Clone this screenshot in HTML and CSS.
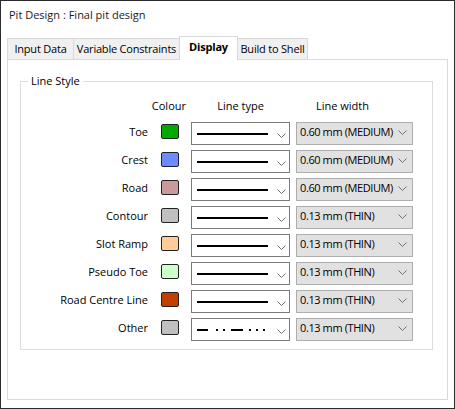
FILE: index.html
```html
<!DOCTYPE html>
<html>
<head>
<meta charset="utf-8">
<link rel="stylesheet" href="styles.css">
</head>
<body>
<div class="window">
  <div class="titlebar">Pit Design : Final pit design</div>
  <div class="tabs">
    <div class="tab t1">Input Data</div>
    <div class="tab t2">Variable Constraints</div>
    <div class="tab t3 active">Display</div>
    <div class="tab t4">Build to Shell</div>
  </div>
  <div class="panel">
    <div class="group">
      <span class="legend">Line Style</span>
      <div class="grid">
        <div></div>
        <div class="hdr hc">Colour</div>
        <div class="hdr hl">Line type</div>
        <div class="hdr hw">Line width</div>

        <div class="label">Toe</div>
        <div class="swatch" style="background:#00aa00"></div>
        <div class="ltype"><svg width="97" height="21"><rect class="solid" x="5" y="10" width="71" height="2"/><polyline class="chev" points="85.5,10.5 89.5,14.5 93.5,10.5"/></svg></div>
        <div class="lwidth"><span>0.60 mm (MEDIUM)</span><svg width="9" height="6"><polyline class="chev" points="0.5,0.5 4.5,4.5 8.5,0.5"/></svg></div>

        <div class="label">Crest</div>
        <div class="swatch" style="background:#6b8cff"></div>
        <div class="ltype"><svg width="97" height="21"><rect class="solid" x="5" y="10" width="71" height="2"/><polyline class="chev" points="85.5,10.5 89.5,14.5 93.5,10.5"/></svg></div>
        <div class="lwidth"><span>0.60 mm (MEDIUM)</span><svg width="9" height="6"><polyline class="chev" points="0.5,0.5 4.5,4.5 8.5,0.5"/></svg></div>

        <div class="label">Road</div>
        <div class="swatch" style="background:#cc9999"></div>
        <div class="ltype"><svg width="97" height="21"><rect class="solid" x="5" y="10" width="71" height="2"/><polyline class="chev" points="85.5,10.5 89.5,14.5 93.5,10.5"/></svg></div>
        <div class="lwidth"><span>0.60 mm (MEDIUM)</span><svg width="9" height="6"><polyline class="chev" points="0.5,0.5 4.5,4.5 8.5,0.5"/></svg></div>

        <div class="label">Contour</div>
        <div class="swatch" style="background:#c0c0c0"></div>
        <div class="ltype"><svg width="97" height="21"><rect class="solid" x="5" y="10" width="71" height="2"/><polyline class="chev" points="85.5,10.5 89.5,14.5 93.5,10.5"/></svg></div>
        <div class="lwidth"><span>0.13 mm (THIN)</span><svg width="9" height="6"><polyline class="chev" points="0.5,0.5 4.5,4.5 8.5,0.5"/></svg></div>

        <div class="label">Slot Ramp</div>
        <div class="swatch" style="background:#ffcc99"></div>
        <div class="ltype"><svg width="97" height="21"><rect class="solid" x="5" y="10" width="71" height="2"/><polyline class="chev" points="85.5,10.5 89.5,14.5 93.5,10.5"/></svg></div>
        <div class="lwidth"><span>0.13 mm (THIN)</span><svg width="9" height="6"><polyline class="chev" points="0.5,0.5 4.5,4.5 8.5,0.5"/></svg></div>

        <div class="label">Pseudo Toe</div>
        <div class="swatch" style="background:#ccffcc"></div>
        <div class="ltype"><svg width="97" height="21"><rect class="solid" x="5" y="10" width="71" height="2"/><polyline class="chev" points="85.5,10.5 89.5,14.5 93.5,10.5"/></svg></div>
        <div class="lwidth"><span>0.13 mm (THIN)</span><svg width="9" height="6"><polyline class="chev" points="0.5,0.5 4.5,4.5 8.5,0.5"/></svg></div>

        <div class="label">Road Centre Line</div>
        <div class="swatch" style="background:#c04000"></div>
        <div class="ltype"><svg width="97" height="21"><rect class="solid" x="5" y="10" width="71" height="2"/><polyline class="chev" points="85.5,10.5 89.5,14.5 93.5,10.5"/></svg></div>
        <div class="lwidth"><span>0.13 mm (THIN)</span><svg width="9" height="6"><polyline class="chev" points="0.5,0.5 4.5,4.5 8.5,0.5"/></svg></div>

        <div class="label">Other</div>
        <div class="swatch" style="background:#c0c0c0"></div>
        <div class="ltype"><svg width="97" height="21"><rect class="solid" x="5" y="10" width="11" height="2"/><rect class="solid" x="24" y="10" width="2" height="2"/><rect class="solid" x="31" y="10" width="2" height="2"/><rect class="solid" x="39" y="10" width="12" height="2"/><rect class="solid" x="57" y="10" width="2" height="2"/><rect class="solid" x="64" y="10" width="2" height="2"/><rect class="solid" x="71" y="10" width="2" height="2"/><polyline class="chev" points="85.5,10.5 89.5,14.5 93.5,10.5"/></svg></div>
        <div class="lwidth"><span>0.13 mm (THIN)</span><svg width="9" height="6"><polyline class="chev" points="0.5,0.5 4.5,4.5 8.5,0.5"/></svg></div>
      </div>
    </div>
  </div>
</div>
</body>
</html>
```

FILE: styles.css
```css
body {
  margin: 0;
}

.window {
  width: 455px;
  height: 409px;
  box-sizing: border-box;
  border: 1px solid #2b2b2b;
  background: #fff;
  font-family: "Open Sans", "Noto Sans", sans-serif;
  font-size: 11px;
  color: #000;
}

.titlebar {
  height: 35px;
  padding-left: 8px;
  line-height: 28px;
  color: #1a1a1a;
}

.tabs {
  display: flex;
  align-items: flex-end;
  height: 24px;
  padding-left: 6px;
  position: relative;
  z-index: 1;
}

.tab {
  box-sizing: border-box;
  height: 21px;
  margin-bottom: 1px;
  border: 1px solid #d9d9d9;
  border-bottom: none;
  background: #f0f0f0;
  text-align: center;
  line-height: 19px;
  white-space: nowrap;
  letter-spacing: -0.2px;
}

.tab + .tab {
  margin-left: -1px;
}

.t1 { width: 67px; }
.t2 { width: 107px; }
.t3 { width: 59px; }
.t4 { width: 71px; }

.tab.active {
  height: 24px;
  margin-bottom: 0;
  background: #fff;
  font-weight: bold;
  line-height: 20px;
  position: relative;
  z-index: 2;
}

.panel {
  box-sizing: border-box;
  width: 441px;
  height: 341px;
  margin-left: 6px;
  margin-top: -1px;
  border: 1px solid #d9d9d9;
  background: #fff;
}

.group {
  box-sizing: border-box;
  width: 413px;
  height: 269px;
  margin-left: 12px;
  margin-top: 21px;
  border: 1px solid #dcdcdc;
  position: relative;
}

.legend {
  position: absolute;
  top: -9px;
  left: 7px;
  padding: 0 3px;
  background: #fff;
  line-height: 16px;
}

.grid {
  display: grid;
  grid-template-columns: 127px 31px 111px 123px;
  grid-template-rows: 19px repeat(8, 23px);
  row-gap: 5px;
  padding-top: 16px;
}

.hdr {
  line-height: 16px;
  align-self: start;
  white-space: nowrap;
}

.hc {
  justify-self: end;
  margin-right: -7px;
}

.hl {
  text-align: center;
  padding-left: 12px;
}

.hw {
  text-align: center;
  padding-left: 6px;
  padding-right: 24px;
}

.label {
  justify-self: end;
  align-self: center;
  line-height: 16px;
  margin-top: -3px;
  white-space: nowrap;
}

.swatch {
  justify-self: end;
  align-self: start;
  box-sizing: border-box;
  width: 18px;
  height: 15px;
  margin-top: 2px;
  border: 1px solid #222;
  border-radius: 2px;
}

.ltype {
  justify-self: end;
  box-sizing: border-box;
  width: 99px;
  height: 23px;
  border: 1px solid #7a7a7a;
  background: #fff;
}

.ltype svg {
  display: block;
}

.solid {
  fill: #000;
}

.chev {
  fill: none;
  stroke: #707070;
  stroke-width: 1;
}

.lwidth {
  justify-self: end;
  box-sizing: border-box;
  width: 117px;
  height: 23px;
  border: 1px solid #adadad;
  background: #e1e1e1;
  display: flex;
  align-items: center;
  padding-left: 3px;
  padding-right: 5px;
}

.lwidth span {
  line-height: 16px;
  margin-top: -3px;
  white-space: nowrap;
  letter-spacing: -0.4px;
}

.lwidth svg {
  display: block;
  margin-left: auto;
  margin-top: -2px;
}
```
